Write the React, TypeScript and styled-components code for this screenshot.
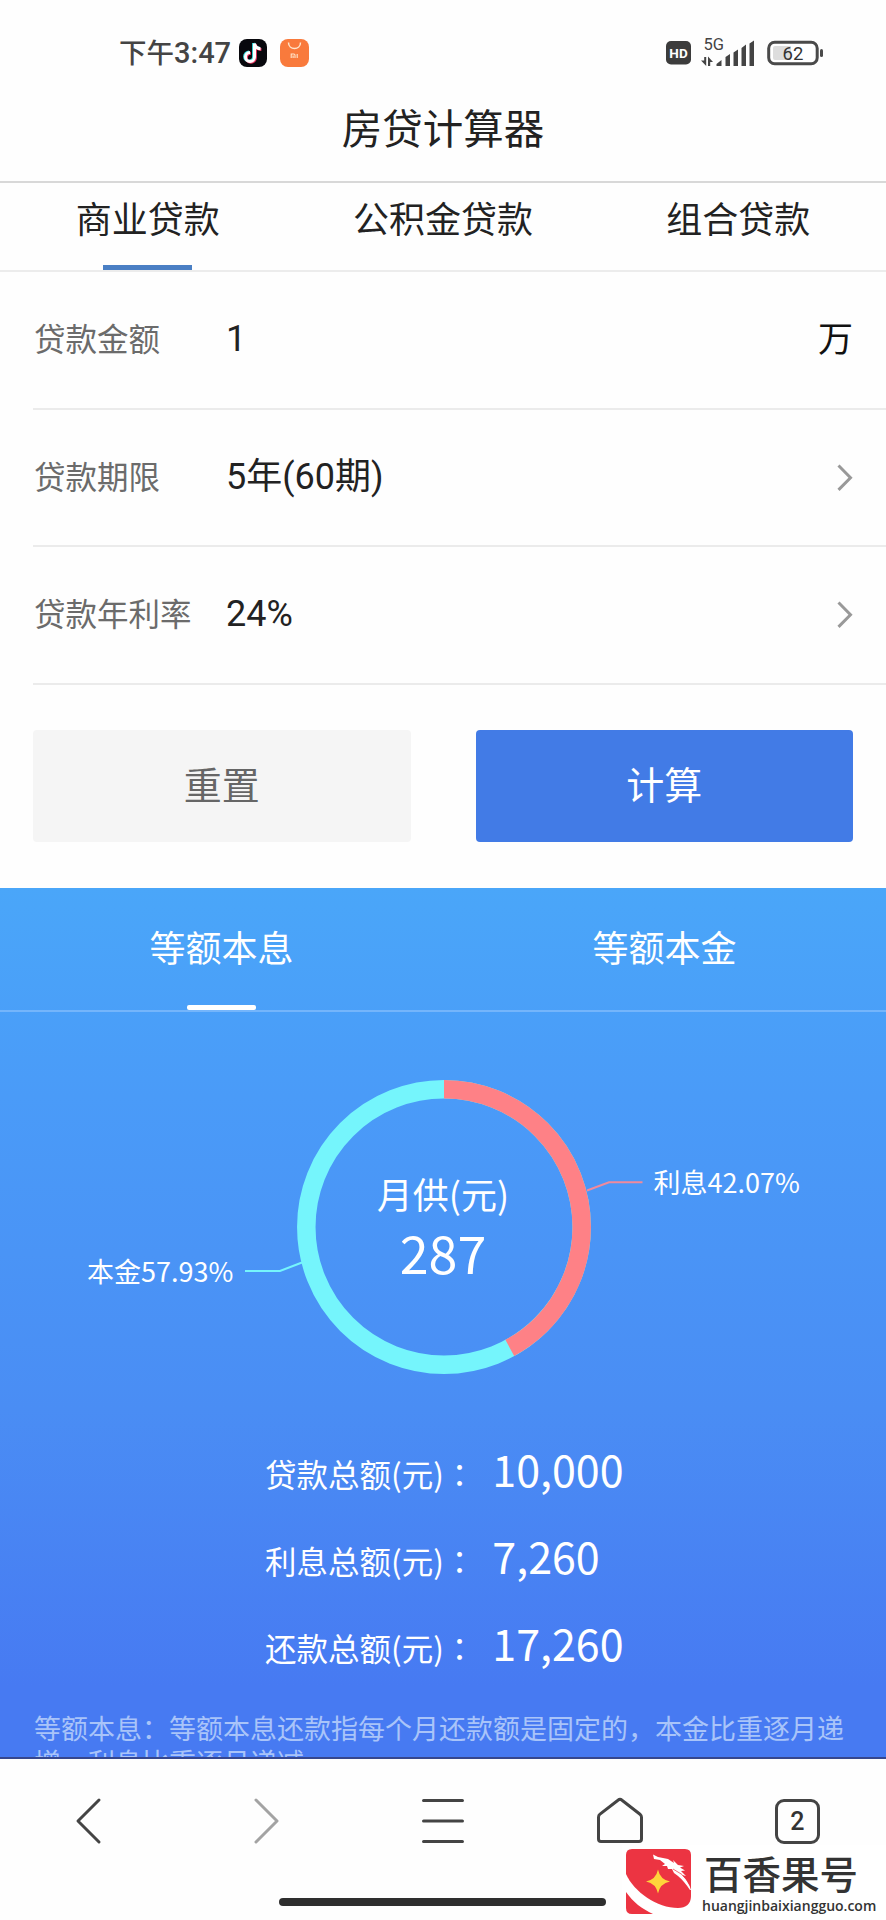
import React from "react";
import styled, { createGlobalStyle } from "styled-components";

const GlobalStyle = createGlobalStyle`
  * { box-sizing: border-box; }
  body {
    margin: 0;
    background: #fff;
    font-family: "Noto Sans CJK SC", sans-serif;
    color: #222;
  }
`;

const Screen = styled.div`
  position: relative;
  width: 886px;
  height: 1920px;
  overflow: hidden;
  display: flex;
  flex-direction: column;
  background: #fefefe;
`;

const StatusBar = styled.header`
  height: 90px;
  padding: 16px 62px 0 119px;
  display: flex;
  justify-content: space-between;
  align-items: center;
`;

const StatusGroup = styled.div<{ $gap: number }>`
  display: flex;
  align-items: center;
  gap: ${(p) => p.$gap}px;
`;

const Clock = styled.span`
  width: 107px;
  font: 500 29px/36px Roboto, "Noto Sans CJK SC", sans-serif;
  color: #444;
  white-space: nowrap;
`;

const ClockPeriod = styled.span`
  font-size: 27.5px;
`;

const Title = styled.h1`
  margin: 0;
  height: 93px;
  border-bottom: 2px solid #d8d8d8;
  text-align: center;
  font-size: 40.5px;
  line-height: 73px;
  font-weight: 400;
`;

const LoanTabs = styled.nav`
  height: 89px;
  display: grid;
  grid-template-columns: repeat(3, 1fr);
  border-bottom: 2px solid #ececec;
`;

const LoanTab = styled.div<{ $active?: boolean }>`
  display: flex;
  flex-direction: column;
  align-items: center;
  justify-content: space-between;
  font-size: 36px;
  line-height: 68px;
  &::after {
    content: "";
    width: 89px;
    height: 5px;
    background: ${(p) => (p.$active ? "#4a7fc4" : "transparent")};
  }
`;

const Form = styled.section`
  padding-left: 33px;
`;

const Field = styled.div`
  height: 137.7px;
  padding: 0 33px 2px 1px;
  display: flex;
  align-items: center;
  border-bottom: 2px solid #ebebeb;
`;

const FieldLabel = styled.span`
  width: 192px;
  padding-bottom: 4px;
  font-size: 31.5px;
  color: #6b6b6b;
`;

const FieldValue = styled.span`
  flex: 1;
  font: 400 36px/48px Roboto, "Noto Sans CJK SC", sans-serif;
  color: #222;
`;

const Unit = styled.span`
  padding-bottom: 4px;
  font-size: 35px;
  color: #111;
`;

const Actions = styled.div`
  height: 203px;
  padding: 45px 33px 0;
  display: flex;
  justify-content: space-between;
`;

const ActionButton = styled.button<{ $primary?: boolean }>`
  width: 377.5px;
  height: 112px;
  padding: 0 0 8px;
  border: 0;
  border-radius: 4px;
  font: 400 38px "Noto Sans CJK SC", sans-serif;
  background: ${(p) => (p.$primary ? "#427be6" : "#f5f5f5")};
  color: ${(p) => (p.$primary ? "#fff" : "#666")};
`;

const Result = styled.section`
  height: 871px;
  overflow: hidden;
  background: linear-gradient(#4aa6f9 0%, #4a9bf8 24%, #4a8df4 60%, #477af2 92%, #477af2 100%);
  border-bottom: 2px solid #36478f;
  color: #fff;
`;

const MethodTabs = styled.nav`
  height: 124px;
  display: grid;
  grid-template-columns: 1fr 1fr;
  border-bottom: 2px solid #74b5fb;
`;

const MethodTab = styled.div<{ $active?: boolean }>`
  display: flex;
  flex-direction: column;
  align-items: center;
  justify-content: space-between;
  font-size: 36px;
  line-height: 116px;
  &::after {
    content: "";
    width: 69px;
    height: 5px;
    border-radius: 2px;
    background: ${(p) => (p.$active ? "#fff" : "transparent")};
  }
`;

const Chart = styled.svg`
  display: block;
  font-family: "Noto Sans CJK SC", sans-serif;
`;

const Totals = styled.dl`
  margin: 0 0 24.5px;
  padding-left: 265px;
`;

const TotalRow = styled.div`
  height: 87px;
  display: flex;
  align-items: baseline;
`;

const TotalLabel = styled.dt`
  font-size: 31.5px;
  white-space: nowrap;
`;

const Colon = styled.span`
  font-family: "Noto Sans CJK TC", sans-serif;
`;

const TotalValue = styled.dd`
  margin: 0 0 0 17px;
  font-size: 43px;
  line-height: 87px;
`;

const Note = styled.p`
  margin: 0;
  width: 816px;
  padding-left: 34px;
  box-sizing: content-box;
  font-size: 27px;
  line-height: 34.5px;
  color: #a9c4f9;
`;

const BrowserBar = styled.nav`
  height: 124px;
  display: grid;
  grid-template-columns: repeat(5, 1fr);
  align-items: center;
  justify-items: center;
`;

const TabCount = styled.div`
  width: 45px;
  height: 45px;
  border: 3px solid #444;
  border-radius: 9px;
  display: flex;
  align-items: center;
  justify-content: center;
  font: 500 25px/1 Roboto, sans-serif;
  color: #333;
`;

const HomeIndicator = styled.div`
  width: 327px;
  height: 8px;
  margin: 15px 0 0 279px;
  border-radius: 4px;
  background: #2e2e2e;
`;

const Watermark = styled.aside`
  position: absolute;
  left: 622px;
  top: 1845px;
  width: 264px;
  height: 75px;
  padding: 3.5px 0 0 3.5px;
  display: flex;
  gap: 11.5px;
  background: #fff;
  color: #333;
`;

const WatermarkText = styled.div`
  display: flex;
  flex-direction: column;
`;

const Brand = styled.span`
  padding-left: 2px;
  font-size: 38.5px;
  font-weight: 500;
  line-height: 47px;
  white-space: nowrap;
`;

const Domain = styled.span`
  padding-top: 2px;
  font: 600 14px/16px "Open Sans", sans-serif;
`;

const ShortVideoIcon = () => (
  <svg width="28" height="28" viewBox="0 0 28 28" fill="none">
    <rect width="28" height="28" rx="8" fill="#08080d" />
    <g strokeWidth="3">
      <path d="M15.500 4.500v13.400a4.500 4.500 0 1 1-4.500-4.500M15.500 4.500c.3 3.200 2.500 5 6 5.200" stroke="#38dce0" transform="translate(-.9 -.5)" />
      <path d="M15.500 4.500v13.400a4.500 4.500 0 1 1-4.500-4.500M15.500 4.500c.3 3.200 2.500 5 6 5.200" stroke="#ee3562" transform="translate(.9 .8)" />
      <path d="M15.500 4.500v13.400a4.500 4.500 0 1 1-4.500-4.500M15.500 4.500c.3 3.200 2.500 5 6 5.200" stroke="#fff" />
    </g>
  </svg>
);

const StoreIcon = () => (
  <svg width="29" height="28" viewBox="0 0 29 28" fill="none">
    <rect width="29" height="28" rx="8" fill="#f97a3c" />
    <path d="M8.500 3.500c0 8 12 8 12 0" stroke="#ffe6cc" strokeWidth="1.500" />
    <path d="M11.200 19v-4h2.600q1.200 0 1.200 1.200V19M13.100 16.500V19M17.200 15v4" stroke="#ffe6cc" strokeWidth="1.100" />
  </svg>
);

const HdIcon = () => (
  <svg width="25" height="24" viewBox="0 0 25 24">
    <rect width="25" height="23.500" rx="5" fill="#3c3c3c" />
    <text x="12.500" y="16.700" fontSize="13.500" fontWeight="700" fontFamily="Roboto, sans-serif" fill="#fff" textAnchor="middle">HD</text>
  </svg>
);

const SignalIcon = () => (
  <svg width="56" height="32" viewBox="0 0 56 32" fill="#444">
    <text x="2.500" y="12.500" fontSize="16.500" fontFamily="Roboto, sans-serif">5G</text>
    <path d="M5.200 20v9L0 23.500h3.200V20zM7 29v-9.500l5 5.500H9.200v4z" />
    <path d="M15.500 29v-2l5-4v6zM24.500 29v-9l4.500-3v12zM32.500 29V15.500l4.500-3V29zM40.500 29V11l4.500-3.500V29zM48.500 29V6.500l4.500-3V29z" />
  </svg>
);

const BatteryIcon = () => (
  <svg width="57" height="26" viewBox="0 0 57 26">
    <rect x="1.700" y="2.200" width="48.500" height="21.600" rx="6" fill="#fff" stroke="#4a4a4a" strokeWidth="3" />
    <path d="M8 6h16v14H8a2 2 0 0 1-2-2V8a2 2 0 0 1 2-2z" fill="#ddd" />
    <rect x="53" y="9" width="3" height="8" rx="1.500" fill="#4a4a4a" />
    <text x="26" y="19.800" fontSize="18.500" fontFamily="Roboto, sans-serif" fill="#333" textAnchor="middle">62</text>
  </svg>
);

const RowChevron = () => (
  <svg width="18" height="32" viewBox="0 0 18 32" fill="none">
    <path d="M3.500 4.500l12 12.200-12 12.200" stroke="#999" strokeWidth="3" />
  </svg>
);

const NavChevron = ({ forward = false }: { forward?: boolean }) => (
  <svg width="28" height="48" viewBox="0 0 28 48" fill="none" strokeWidth="3" strokeLinecap="round" strokeLinejoin="round">
    <path d={forward ? "M4 3l21 21L4 45" : "M24 3L3 24l21 21"} stroke={forward ? "#a3a3a3" : "#444"} />
  </svg>
);

const MenuIcon = () => (
  <svg width="42" height="48" viewBox="0 0 42 48" stroke="#444" strokeWidth="3.200" strokeLinecap="round">
    <path d="M1.600 3.500h38.800M1.600 24h38.800M1.600 44.500h38.800" />
  </svg>
);

const HomeIcon = () => (
  <svg width="48" height="48" viewBox="0 0 48 48" fill="none" stroke="#444" strokeWidth="3" strokeLinejoin="round">
    <path d="M22 3.200q2-1.700 4 0l18 14q1.500 1.200 1.500 3V42q0 2.500-2.500 2.500H5Q2.500 44.500 2.500 42V20.200q0-1.800 1.500-3z" />
  </svg>
);

const LogoSvg = styled.svg`
  flex: none;
`;

const DragonLogo = () => (
  <LogoSvg width="65" height="65" viewBox="0 0 65 65">
    <path d="M6 0h53q6 0 6 6v41c0 8-5 12-13 12C31 59 8 43 0 25V6q0-6 6-6z" fill="#ec3442" />
    <path d="M0 43C7 53 16 60 27 65H6q-6 0-6-6z" fill="#ec3442" />
    <path d="M27 5.500l5 2.500 10 2 6 4-1-3 5 5 6 1-4 1.500 5 3-4 .5 5 5-4-1q7 7 9 15l-1 0q-6-9-12-14l-4-3-2-4-4 0-1-3-5 0 3-2-5-4-6-1z" fill="#fff" />
    <path d="M47 20l9 5.500q5 5 8 11" fill="none" stroke="#ec3442" strokeWidth=".7" />
    <path d="M32 20.500q2 10 12 12-10 2-12 12-2-10-12-12 10-2 12-12z" fill="#ffd43b" />
  </LogoSvg>
);

const fields = [
  { label: "贷款金额", value: "1", unit: "万" },
  { label: "贷款期限", value: "5年(60期)" },
  { label: "贷款年利率", value: "24%" },
];

const totals = [
  ["贷款总额(元)", "10,000"],
  ["利息总额(元)", "7,260"],
  ["还款总额(元)", "17,260"],
];

const RepaymentChart = () => (
  <Chart width="886" height="413" viewBox="0 0 886 413" fill="none">
    <circle cx="444" cy="215" r="137.700" stroke="#75f5fc" strokeWidth="18.500" />
    <circle
      cx="444"
      cy="215"
      r="137.700"
      stroke="#fe8186"
      strokeWidth="18.500"
      pathLength={100}
      strokeDasharray="42.07 57.93"
      transform="rotate(-90 444 215)"
    />
    <path d="M587 178.500l22-8.200h33.500" stroke="#f08a9c" strokeWidth="2" />
    <path d="M302 250.500l-22 8.500h-35" stroke="#75f5fc" strokeWidth="2" />
    <g fill="#fff">
      <text x="653.500" y="180.500" fontSize="27">利息42.07%</text>
      <text x="87" y="269.500" fontSize="27">本金57.93%</text>
      <text x="443" y="197" fontSize="36" textAnchor="middle">月供(元)</text>
      <text x="443" y="262" fontSize="52" textAnchor="middle">287</text>
    </g>
  </Chart>
);

export default function App() {
  return (
    <>
      <GlobalStyle />
      <Screen>
        <StatusBar>
          <StatusGroup $gap={13}>
            <Clock><ClockPeriod>下午</ClockPeriod>3:47</Clock>
            <ShortVideoIcon />
            <StoreIcon />
          </StatusGroup>
          <StatusGroup $gap={10}>
            <HdIcon />
            <SignalIcon />
            <BatteryIcon />
          </StatusGroup>
        </StatusBar>
        <Title>房贷计算器</Title>
        <LoanTabs>
          <LoanTab $active>商业贷款</LoanTab>
          <LoanTab>公积金贷款</LoanTab>
          <LoanTab>组合贷款</LoanTab>
        </LoanTabs>
        <Form>
          {fields.map((f) => (
            <Field key={f.label}>
              <FieldLabel>{f.label}</FieldLabel>
              <FieldValue>{f.value}</FieldValue>
              {f.unit ? <Unit>{f.unit}</Unit> : <RowChevron />}
            </Field>
          ))}
        </Form>
        <Actions>
          <ActionButton>重置</ActionButton>
          <ActionButton $primary>计算</ActionButton>
        </Actions>
        <Result>
          <MethodTabs>
            <MethodTab $active>等额本息</MethodTab>
            <MethodTab>等额本金</MethodTab>
          </MethodTabs>
          <RepaymentChart />
          <Totals>
            {totals.map(([label, value]) => (
              <TotalRow key={label}>
                <TotalLabel>{label}<Colon>：</Colon></TotalLabel>
                <TotalValue>{value}</TotalValue>
              </TotalRow>
            ))}
          </Totals>
          <Note>等额本息：等额本息还款指每个月还款额是固定的，本金比重逐月递增，利息比重逐月递减。</Note>
        </Result>
        <BrowserBar>
          <NavChevron />
          <NavChevron forward />
          <MenuIcon />
          <HomeIcon />
          <TabCount>2</TabCount>
        </BrowserBar>
        <HomeIndicator />
        <Watermark>
          <DragonLogo />
          <WatermarkText>
            <Brand>百香果号</Brand>
            <Domain>huangjinbaixiangguo.com</Domain>
          </WatermarkText>
        </Watermark>
      </Screen>
    </>
  );
}
